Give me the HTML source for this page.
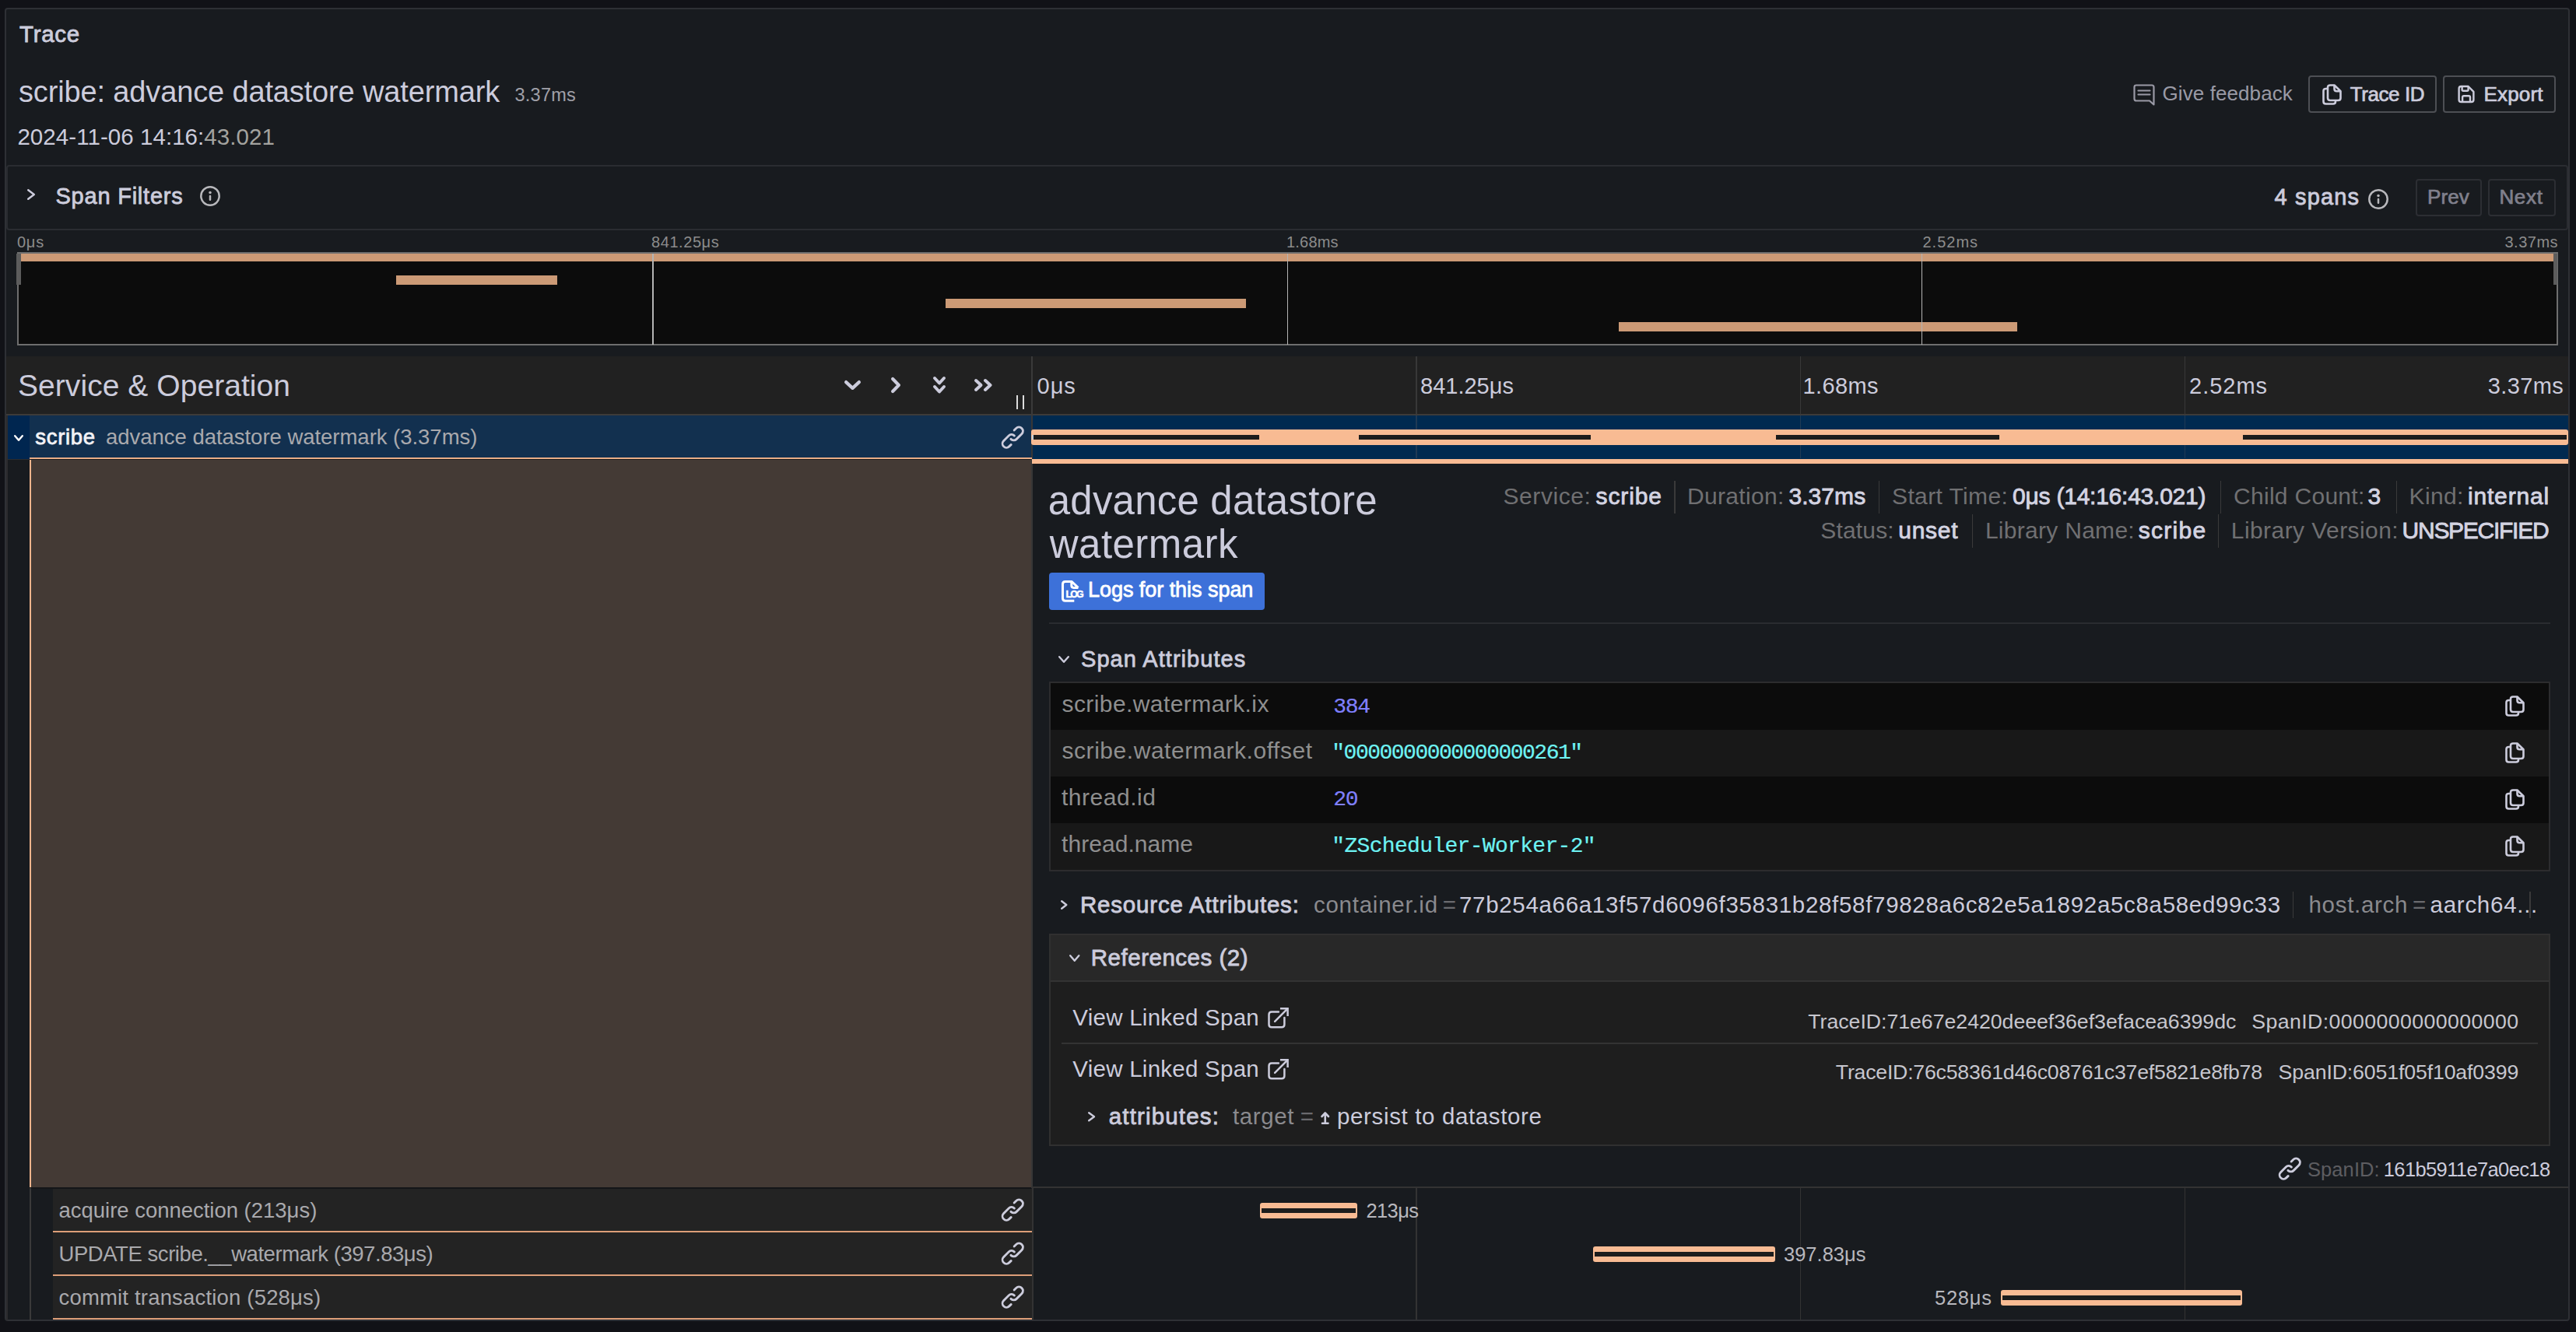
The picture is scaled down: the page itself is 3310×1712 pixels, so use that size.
<!DOCTYPE html>
<html><head><meta charset="utf-8"><title>Trace</title>
<style>
html,body{margin:0;padding:0;width:3310px;height:1712px;overflow:hidden;background:#111217;}
.t{position:absolute;white-space:pre;}
svg{overflow:visible}
</style></head><body>
<div style="position:absolute;left:6px;top:10px;width:3296px;height:1688px;box-sizing:border-box;border:2px solid #2e3035;border-radius:4px;background:#181b1f"></div>
<div style="position:absolute;left:2966px;top:97px;width:165px;height:48px;box-sizing:border-box;border:2px solid #4d4f54;border-radius:4px"></div>
<div style="position:absolute;left:3139px;top:97px;width:145px;height:48px;box-sizing:border-box;border:2px solid #4d4f54;border-radius:4px"></div>
<div style="position:absolute;left:7.5px;top:212px;width:3292.5px;height:84px;box-sizing:border-box;border:2px solid #2a2c31;border-radius:4px"></div>
<div style="position:absolute;left:3104px;top:230px;width:85px;height:48px;box-sizing:border-box;border:2px solid #2c2e33;border-radius:4px"></div>
<div style="position:absolute;left:3197px;top:230px;width:87px;height:48px;box-sizing:border-box;border:2px solid #2c2e33;border-radius:4px"></div>
<div style="position:absolute;left:22px;top:324px;width:1px;height:1px"></div>
<div style="position:absolute;left:22px;top:324px;width:3265px;height:120px;background:#6e6e6e;"></div>
<div style="position:absolute;left:24px;top:326px;width:3261px;height:116px;background:#0c0c0c;"></div>
<div style="position:absolute;left:27px;top:326px;width:3254px;height:10px;background:#cc9a76;"></div>
<div style="position:absolute;left:21px;top:326px;width:6px;height:40px;background:#5c5c5c;"></div>
<div style="position:absolute;left:3281px;top:326px;width:5px;height:40px;background:#5c5c5c;"></div>
<div style="position:absolute;left:509px;top:354px;width:207px;height:12px;background:#cc9a76;"></div>
<div style="position:absolute;left:1215px;top:384px;width:386px;height:12px;background:#cc9a76;"></div>
<div style="position:absolute;left:2080px;top:414px;width:512px;height:12px;background:#cc9a76;"></div>
<div style="position:absolute;left:838px;top:326px;width:1.5px;height:117px;background:#b4b4b4;"></div>
<div style="position:absolute;left:1653.5px;top:326px;width:1.5px;height:117px;background:#b4b4b4;"></div>
<div style="position:absolute;left:2468.5px;top:326px;width:1.5px;height:117px;background:#b4b4b4;"></div>
<div style="position:absolute;left:8px;top:458px;width:3292px;height:74px;background:#212121;"></div>
<div style="position:absolute;left:8px;top:532px;width:3292px;height:2px;background:#3d3b39;"></div>
<div style="position:absolute;left:1305.5px;top:508px;width:2.0px;height:18px;background:#dcdcdc;"></div>
<div style="position:absolute;left:1313.5px;top:508px;width:2.0px;height:18px;background:#dcdcdc;"></div>
<div style="position:absolute;left:1325px;top:458px;width:2px;height:76px;background:#3a3a3a;"></div>
<div style="position:absolute;left:1819px;top:458px;width:1.5px;height:74px;background:#383838;"></div>
<div style="position:absolute;left:2312.5px;top:458px;width:1.5px;height:74px;background:#383838;"></div>
<div style="position:absolute;left:2806.5px;top:458px;width:1.5px;height:74px;background:#383838;"></div>
<div style="position:absolute;left:8px;top:534px;width:2px;height:1163px;background:#2c2c2e;"></div>
<div style="position:absolute;left:10px;top:534px;width:28px;height:55.5px;background:#002650;"></div>
<div style="position:absolute;left:10px;top:589.5px;width:28px;height:1.5px;background:#2a2c30;"></div>
<div style="position:absolute;left:38px;top:534px;width:1288px;height:54px;background:#12304f;"></div>
<div style="position:absolute;left:1326px;top:534px;width:1974px;height:55.5px;background:#002a50;"></div>
<div style="position:absolute;left:1325px;top:534px;width:2px;height:992px;background:#373737;"></div>
<div style="position:absolute;left:1819px;top:534px;width:1.5px;height:55px;background:#1f3a55;"></div>
<div style="position:absolute;left:2312.5px;top:534px;width:1.5px;height:55px;background:#1f3a55;"></div>
<div style="position:absolute;left:2806.5px;top:534px;width:1.5px;height:55px;background:#1f3a55;"></div>
<div style="position:absolute;left:1325px;top:552px;width:1975px;height:19.5px;background:#f8bb93;border-radius:3px"></div>
<div style="position:absolute;left:1327px;top:559px;width:290.5px;height:5.600000000000023px;background:#1c1c1c;"></div>
<div style="position:absolute;left:1745.5px;top:559px;width:298.0999999999999px;height:5.600000000000023px;background:#1c1c1c;"></div>
<div style="position:absolute;left:2281.6px;top:559px;width:287.0px;height:5.600000000000023px;background:#1c1c1c;"></div>
<div style="position:absolute;left:2882px;top:559px;width:416px;height:5.600000000000023px;background:#1c1c1c;"></div>
<div style="position:absolute;left:1325.5px;top:559px;width:2.0px;height:5.600000000000023px;background:#c5ced6;"></div>
<div style="position:absolute;left:38px;top:588px;width:1288px;height:2px;background:#eaad86;"></div>
<div style="position:absolute;left:1326px;top:589.5px;width:1974px;height:6.5px;background:#f8bb93;"></div>
<div style="position:absolute;left:38px;top:590.5px;width:1287px;height:935.5px;background:#443a35;"></div>
<div style="position:absolute;left:38px;top:590.5px;width:2px;height:935.5px;background:#eeb48c;"></div>
<div style="position:absolute;left:1348px;top:736px;width:277px;height:48px;background:#3d71d9;border-radius:4px"></div>
<div style="position:absolute;left:2151px;top:617.5px;width:1.5px;height:42.5px;background:#3a3a3a;"></div>
<div style="position:absolute;left:2413.5px;top:617.5px;width:1.5px;height:42.5px;background:#3a3a3a;"></div>
<div style="position:absolute;left:2852.5px;top:617.5px;width:1.5px;height:42.5px;background:#3a3a3a;"></div>
<div style="position:absolute;left:3078.5px;top:617.5px;width:1.5px;height:42.5px;background:#3a3a3a;"></div>
<div style="position:absolute;left:2533.5px;top:661.3px;width:1.5px;height:43.200000000000045px;background:#3a3a3a;"></div>
<div style="position:absolute;left:2849.5px;top:661.3px;width:1.5px;height:43.200000000000045px;background:#3a3a3a;"></div>
<div style="position:absolute;left:1348px;top:800px;width:1929px;height:2px;background:#2a2c30;"></div>
<div style="position:absolute;left:1348px;top:876px;width:1929px;height:244px;box-sizing:border-box;border:2px solid #2c2c2e"></div>
<div style="position:absolute;left:1350px;top:878px;width:1925px;height:59.60000000000002px;background:#0c0c0c;"></div>
<div style="position:absolute;left:1350px;top:937.6px;width:1925px;height:60.0px;background:#181818;"></div>
<div style="position:absolute;left:1350px;top:997.6px;width:1925px;height:59.999999999999886px;background:#0c0c0c;"></div>
<div style="position:absolute;left:1350px;top:1057.6px;width:1925px;height:60.40000000000009px;background:#181818;"></div>
<div style="position:absolute;left:2945.5px;top:1146px;width:1.5px;height:34px;background:#3a3a3a;"></div>
<div style="position:absolute;left:3250px;top:1146px;width:1.5px;height:34px;background:#3a3a3a;"></div>
<div style="position:absolute;left:1348px;top:1200px;width:1929px;height:273px;box-sizing:border-box;border:2px solid #303030;background:#1e1e1e"></div>
<div style="position:absolute;left:1350px;top:1202px;width:1925px;height:58px;background:#282828;"></div>
<div style="position:absolute;left:1350px;top:1260px;width:1925px;height:2px;background:#333333;"></div>
<div style="position:absolute;left:1364px;top:1340px;width:1897px;height:2px;background:#333333;"></div>
<div style="position:absolute;left:38px;top:1526px;width:1287px;height:1.5px;background:#141518;"></div>
<div style="position:absolute;left:1325px;top:1525px;width:1975px;height:2px;background:#333333;"></div>
<div style="position:absolute;left:1326px;top:1527px;width:1.5px;height:170px;background:#333333;"></div>
<div style="position:absolute;left:1819px;top:1527px;width:1.5px;height:170px;background:#333333;"></div>
<div style="position:absolute;left:2312.5px;top:1527px;width:1.5px;height:170px;background:#333333;"></div>
<div style="position:absolute;left:2806.5px;top:1527px;width:1.5px;height:170px;background:#333333;"></div>
<div style="position:absolute;left:38px;top:1527px;width:2px;height:170px;background:#3a3a3a;"></div>
<div style="position:absolute;left:68px;top:1528px;width:1258px;height:54px;background:#232323;"></div>
<div style="position:absolute;left:68px;top:1582px;width:1258px;height:2px;background:#dd9e78;"></div>
<div style="position:absolute;left:1619px;top:1546px;width:125px;height:19.5px;background:#f8bb93;border-radius:3px"></div>
<div style="position:absolute;left:1621px;top:1552.5px;width:121px;height:6.5px;background:#1c1c1c;"></div>
<div style="position:absolute;left:68px;top:1584px;width:1258px;height:54px;background:#232323;"></div>
<div style="position:absolute;left:68px;top:1638px;width:1258px;height:2px;background:#dd9e78;"></div>
<div style="position:absolute;left:2047px;top:1602px;width:234px;height:19.5px;background:#f8bb93;border-radius:3px"></div>
<div style="position:absolute;left:2049px;top:1608.5px;width:230px;height:6.5px;background:#1c1c1c;"></div>
<div style="position:absolute;left:68px;top:1640px;width:1258px;height:54px;background:#232323;"></div>
<div style="position:absolute;left:68px;top:1694px;width:1258px;height:2px;background:#dd9e78;"></div>
<div style="position:absolute;left:2570.5px;top:1658px;width:310.0px;height:19.5px;background:#f8bb93;border-radius:3px"></div>
<div style="position:absolute;left:2572.5px;top:1664.5px;width:306.0px;height:6.5px;background:#1c1c1c;"></div>
<svg style="position:absolute;left:2741px;top:108px;" width="28" height="28" viewBox="0 0 28 28"><g fill="none" stroke="#9a9aa6" stroke-width="2.2" stroke-linejoin="round"><path d="M4,1.5 H24 Q26.5,1.5 26.5,4 V26.5 L21,21.5 H4 Q1.5,21.5 1.5,19 V4 Q1.5,1.5 4,1.5 Z"/><path d="M6.5,8.5 H21.5 M6.5,13.5 H21.5" stroke-linecap="round"/></g></svg>
<svg style="position:absolute;left:2984px;top:108px;" width="25" height="27" viewBox="0 0 25 27"><g fill="none" stroke="#ccccdc" stroke-width="2.6" stroke-linejoin="round"><path d="M7,6 H4.5 Q1.5,6 1.5,9 V22.5 Q1.5,25.5 4.5,25.5 H14 Q17,25.5 17,22.5 V21"/><path d="M10,1.5 H15.5 L23.5,9.3 V18 Q23.5,21 20.5,21 H10 Q7,21 7,18 V4.5 Q7,1.5 10,1.5 Z"/><path d="M15.5,1.5 V6.3 Q15.5,9.3 18.5,9.3 H23.5"/></g></svg>
<svg style="position:absolute;left:3157px;top:109px;" width="23" height="24" viewBox="0 0 23 24"><g fill="none" stroke="#ccccdc" stroke-width="2.4" stroke-linejoin="round"><path d="M5.4,2 H14.6 L21.4,8.9 V19.2 Q21.4,22 18.6,22 H5.4 Q2.6,22 2.6,19.2 V4.8 Q2.6,2 5.4,2 Z"/><path d="M6.6,2.2 V6.2 Q6.6,7.7 8.1,7.7 H13.1 Q14.6,7.7 14.6,6.2 V2.5"/><path d="M7.1,21.8 V16.1 Q7.1,14.3 8.9,14.3 H15.2 Q17,14.3 17,16.1 V21.8"/></g></svg>
<svg style="position:absolute;left:35px;top:243px;" width="10" height="14" viewBox="0 0 10 14"><polyline points="1.25,1.25 8.75,7.0 1.25,12.75" fill="none" stroke="#ccccdc" stroke-width="2.5" stroke-linecap="round" stroke-linejoin="round"/></svg>
<svg style="position:absolute;left:257.0px;top:239.0px;" width="26.0" height="26.0" viewBox="0 0 26.0 26.0"><circle cx="13.0" cy="13.0" r="11.7" fill="none" stroke="#b8b8bc" stroke-width="2.5"/><circle cx="13.0" cy="8.4" r="1.75" fill="#b8b8bc"/><rect x="11.75" y="11.8" width="2.5" height="7.2" rx="1.2" fill="#b8b8bc"/></svg>
<svg style="position:absolute;left:3042.7px;top:242.7px;" width="26.0" height="26.0" viewBox="0 0 26.0 26.0"><circle cx="13.0" cy="13.0" r="11.7" fill="none" stroke="#b8b8bc" stroke-width="2.5"/><circle cx="13.0" cy="8.4" r="1.75" fill="#b8b8bc"/><rect x="11.75" y="11.8" width="2.5" height="7.2" rx="1.2" fill="#b8b8bc"/></svg>
<svg style="position:absolute;left:1085px;top:489px;" width="21" height="12" viewBox="0 0 21 12"><polyline points="2.1,2.1 10.5,9.9 18.9,2.1" fill="none" stroke="#ccccdc" stroke-width="4.2" stroke-linecap="round" stroke-linejoin="round"/></svg>
<svg style="position:absolute;left:1145px;top:485px;" width="12" height="20" viewBox="0 0 12 20"><polyline points="2.1,2.1 9.9,10.0 2.1,17.9" fill="none" stroke="#ccccdc" stroke-width="4.2" stroke-linecap="round" stroke-linejoin="round"/></svg>
<svg style="position:absolute;left:1199px;top:484px;" width="16" height="10.5" viewBox="0 0 16 10.5"><polyline points="2.0,2.0 8.0,8.5 14.0,2.0" fill="none" stroke="#ccccdc" stroke-width="4.0" stroke-linecap="round" stroke-linejoin="round"/></svg>
<svg style="position:absolute;left:1199px;top:495px;" width="16" height="10.5" viewBox="0 0 16 10.5"><polyline points="2.0,2.0 8.0,8.5 14.0,2.0" fill="none" stroke="#ccccdc" stroke-width="4.0" stroke-linecap="round" stroke-linejoin="round"/></svg>
<svg style="position:absolute;left:1252px;top:487px;" width="10.5" height="16" viewBox="0 0 10.5 16"><polyline points="2.0,2.0 8.5,8.0 2.0,14.0" fill="none" stroke="#ccccdc" stroke-width="4.0" stroke-linecap="round" stroke-linejoin="round"/></svg>
<svg style="position:absolute;left:1263.5px;top:487px;" width="10.5" height="16" viewBox="0 0 10.5 16"><polyline points="2.0,2.0 8.5,8.0 2.0,14.0" fill="none" stroke="#ccccdc" stroke-width="4.0" stroke-linecap="round" stroke-linejoin="round"/></svg>
<svg style="position:absolute;left:18px;top:559px;" width="12" height="8" viewBox="0 0 12 8"><polyline points="1.2,1.2 6.0,6.8 10.8,1.2" fill="none" stroke="#ffffff" stroke-width="2.4" stroke-linecap="round" stroke-linejoin="round"/></svg>
<svg style="position:absolute;left:1287.8px;top:548.8px;" width="26.40000000000009" height="26.40000000000009" viewBox="3.0 3.0 18.0 18.0"><path d="M10,17.55,8.23,19.27a2.47,2.47,0,0,1-3.5-3.5l4.54-4.55a2.46,2.46,0,0,1,3.39-.09l.12.1a1,1,0,0,0,1.4-1.43A2.75,2.75,0,0,0,14,9.59a4.46,4.46,0,0,0-6.09.22L3.31,14.36a4.48,4.48,0,0,0,6.33,6.33L11.37,19A1,1,0,0,0,10,17.55ZM20.69,3.31a4.49,4.49,0,0,0-6.330,0L12.63,5A1,1,0,0,0,14,6.45l1.73-1.72a2.470,2.470,0,0,1,3.5,3.5l-4.54,4.55a2.46,2.46,0,0,1-3.39.09l-.12-.1a1,1,0,0,0-1.4,1.43,2.75,2.75,0,0,0,.23.21,4.47,4.47,0,0,0,6.090-.22l4.55-4.55A4.49,4.49,0,0,0,20.69,3.31Z" fill="#ccccdc"/></svg>
<svg style="position:absolute;left:1360px;top:744px;" width="36" height="34" viewBox="0 0 36 34"><g fill="none" stroke="#fff" stroke-width="3" stroke-linejoin="round"><path d="M20.3,28.3 H8.8 Q5.5,28.3 5.5,25 V6.8 Q5.5,3.5 8.8,3.5 H17.2 L25.4,11.4"/><path d="M16.8,4 V8.6 Q16.8,11.4 19.6,11.4 H25.4"/></g><text x="9.6" y="24.2" font-family="Liberation Sans" font-weight="700" font-size="12.4" fill="#fff" stroke="#fff" stroke-width="0.5" letter-spacing="-1.9">LOG</text></svg>
<svg style="position:absolute;left:1360px;top:843px;" width="14" height="9" viewBox="0 0 14 9"><polyline points="1.2,1.2 7.0,7.8 12.8,1.2" fill="none" stroke="#ccccdc" stroke-width="2.4" stroke-linecap="round" stroke-linejoin="round"/></svg>
<svg style="position:absolute;left:3218.5px;top:894.3px;" width="25.0" height="27.0" viewBox="0 0 25.0 27.0"><g fill="none" stroke="#ccccdc" stroke-width="2.6" stroke-linejoin="round"><path d="M7,6 H4.5 Q1.5,6 1.5,9 V22.5 Q1.5,25.5 4.5,25.5 H14 Q17,25.5 17,22.5 V21"/><path d="M10,1.5 H15.5 L23.5,9.3 V18 Q23.5,21 20.5,21 H10 Q7,21 7,18 V4.5 Q7,1.5 10,1.5 Z"/><path d="M15.5,1.5 V6.3 Q15.5,9.3 18.5,9.3 H23.5"/></g></svg>
<svg style="position:absolute;left:3218.5px;top:954.3px;" width="25.0" height="27.0" viewBox="0 0 25.0 27.0"><g fill="none" stroke="#ccccdc" stroke-width="2.6" stroke-linejoin="round"><path d="M7,6 H4.5 Q1.5,6 1.5,9 V22.5 Q1.5,25.5 4.5,25.5 H14 Q17,25.5 17,22.5 V21"/><path d="M10,1.5 H15.5 L23.5,9.3 V18 Q23.5,21 20.5,21 H10 Q7,21 7,18 V4.5 Q7,1.5 10,1.5 Z"/><path d="M15.5,1.5 V6.3 Q15.5,9.3 18.5,9.3 H23.5"/></g></svg>
<svg style="position:absolute;left:3218.5px;top:1014.3px;" width="25.0" height="27.0" viewBox="0 0 25.0 27.0"><g fill="none" stroke="#ccccdc" stroke-width="2.6" stroke-linejoin="round"><path d="M7,6 H4.5 Q1.5,6 1.5,9 V22.5 Q1.5,25.5 4.5,25.5 H14 Q17,25.5 17,22.5 V21"/><path d="M10,1.5 H15.5 L23.5,9.3 V18 Q23.5,21 20.5,21 H10 Q7,21 7,18 V4.5 Q7,1.5 10,1.5 Z"/><path d="M15.5,1.5 V6.3 Q15.5,9.3 18.5,9.3 H23.5"/></g></svg>
<svg style="position:absolute;left:3218.5px;top:1074.3px;" width="25.0" height="27.0" viewBox="0 0 25.0 27.0"><g fill="none" stroke="#ccccdc" stroke-width="2.6" stroke-linejoin="round"><path d="M7,6 H4.5 Q1.5,6 1.5,9 V22.5 Q1.5,25.5 4.5,25.5 H14 Q17,25.5 17,22.5 V21"/><path d="M10,1.5 H15.5 L23.5,9.3 V18 Q23.5,21 20.5,21 H10 Q7,21 7,18 V4.5 Q7,1.5 10,1.5 Z"/><path d="M15.5,1.5 V6.3 Q15.5,9.3 18.5,9.3 H23.5"/></g></svg>
<svg style="position:absolute;left:1362.5px;top:1157px;" width="8.5" height="12" viewBox="0 0 8.5 12"><polyline points="1.2,1.2 7.3,6.0 1.2,10.8" fill="none" stroke="#ccccdc" stroke-width="2.4" stroke-linecap="round" stroke-linejoin="round"/></svg>
<svg style="position:absolute;left:1374px;top:1227px;" width="13.5" height="9" viewBox="0 0 13.5 9"><polyline points="1.2,1.2 6.75,7.8 12.3,1.2" fill="none" stroke="#ccccdc" stroke-width="2.4" stroke-linecap="round" stroke-linejoin="round"/></svg>
<svg style="position:absolute;left:1628.5px;top:1294.5px;" width="27.0" height="27.0" viewBox="0 0 27.0 27.0"><g fill="none" stroke="#ccccdc" stroke-width="2.5" stroke-linejoin="round"><path d="M13.9,5.5 H5 Q1.5,5.5 1.5,9 V21.8 Q1.5,25.3 5,25.3 H17.9 Q21.4,25.3 21.4,21.8 V13" stroke-linecap="round"/><path d="M17.2,1.3 H25.6 V9.7" stroke-linecap="square" stroke-linejoin="miter"/><path d="M25.2,1.7 L9.1,17.8" stroke-linecap="round"/></g></svg>
<svg style="position:absolute;left:1628.5px;top:1360.5px;" width="27.0" height="27.0" viewBox="0 0 27.0 27.0"><g fill="none" stroke="#ccccdc" stroke-width="2.5" stroke-linejoin="round"><path d="M13.9,5.5 H5 Q1.5,5.5 1.5,9 V21.8 Q1.5,25.3 5,25.3 H17.9 Q21.4,25.3 21.4,21.8 V13" stroke-linecap="round"/><path d="M17.2,1.3 H25.6 V9.7" stroke-linecap="square" stroke-linejoin="miter"/><path d="M25.2,1.7 L9.1,17.8" stroke-linecap="round"/></g></svg>
<svg style="position:absolute;left:1398.3px;top:1428.5px;" width="9.200000000000045" height="12.5" viewBox="0 0 9.200000000000045 12.5"><polyline points="1.2,1.2 8.000000000000046,6.25 1.2,11.3" fill="none" stroke="#ccccdc" stroke-width="2.4" stroke-linecap="round" stroke-linejoin="round"/></svg>
<svg style="position:absolute;left:1696.5px;top:1429px;" width="11.5" height="16" viewBox="0 0 11.5 16"><g fill="none" stroke="#ccccdc" stroke-width="2.6" stroke-linecap="round" stroke-linejoin="round"><path d="M5.75,14.5 V2 M1.5,6 L5.75,1.5 L10,6 M2,14.8 H9.5"/></g></svg>
<svg style="position:absolute;left:2928.8px;top:1488.8px;" width="26.399999999999636" height="26.40000000000009" viewBox="3.0 3.0 18.0 18.0"><path d="M10,17.55,8.23,19.27a2.47,2.47,0,0,1-3.5-3.5l4.54-4.55a2.46,2.46,0,0,1,3.39-.09l.12.1a1,1,0,0,0,1.4-1.43A2.75,2.75,0,0,0,14,9.59a4.46,4.46,0,0,0-6.09.22L3.31,14.36a4.48,4.48,0,0,0,6.33,6.33L11.37,19A1,1,0,0,0,10,17.55ZM20.69,3.31a4.49,4.49,0,0,0-6.330,0L12.63,5A1,1,0,0,0,14,6.45l1.73-1.72a2.470,2.470,0,0,1,3.5,3.5l-4.54,4.55a2.46,2.46,0,0,1-3.39.09l-.12-.1a1,1,0,0,0-1.4,1.43,2.75,2.75,0,0,0,.23.21,4.47,4.47,0,0,0,6.090-.22l4.55-4.55A4.49,4.49,0,0,0,20.69,3.31Z" fill="#ccccdc"/></svg>
<svg style="position:absolute;left:1287.8px;top:1542.1px;" width="26.40000000000009" height="26.40000000000009" viewBox="3.0 3.0 18.0 18.0"><path d="M10,17.55,8.23,19.27a2.47,2.47,0,0,1-3.5-3.5l4.54-4.55a2.46,2.46,0,0,1,3.39-.09l.12.1a1,1,0,0,0,1.4-1.43A2.75,2.75,0,0,0,14,9.59a4.46,4.46,0,0,0-6.09.22L3.31,14.36a4.48,4.48,0,0,0,6.33,6.33L11.37,19A1,1,0,0,0,10,17.55ZM20.69,3.31a4.49,4.49,0,0,0-6.330,0L12.63,5A1,1,0,0,0,14,6.45l1.73-1.72a2.470,2.470,0,0,1,3.5,3.5l-4.54,4.55a2.46,2.46,0,0,1-3.39.09l-.12-.1a1,1,0,0,0-1.4,1.43,2.75,2.75,0,0,0,.23.21,4.47,4.47,0,0,0,6.090-.22l4.55-4.55A4.49,4.49,0,0,0,20.69,3.31Z" fill="#ccccdc"/></svg>
<svg style="position:absolute;left:1287.8px;top:1598.1px;" width="26.40000000000009" height="26.40000000000009" viewBox="3.0 3.0 18.0 18.0"><path d="M10,17.55,8.23,19.27a2.47,2.47,0,0,1-3.5-3.5l4.54-4.55a2.46,2.46,0,0,1,3.39-.09l.12.1a1,1,0,0,0,1.4-1.43A2.75,2.75,0,0,0,14,9.59a4.46,4.46,0,0,0-6.09.22L3.31,14.36a4.48,4.48,0,0,0,6.33,6.33L11.37,19A1,1,0,0,0,10,17.55ZM20.69,3.31a4.49,4.49,0,0,0-6.330,0L12.63,5A1,1,0,0,0,14,6.45l1.73-1.72a2.470,2.470,0,0,1,3.5,3.5l-4.54,4.55a2.46,2.46,0,0,1-3.39.09l-.12-.1a1,1,0,0,0-1.4,1.43,2.75,2.75,0,0,0,.23.21,4.47,4.47,0,0,0,6.090-.22l4.55-4.55A4.49,4.49,0,0,0,20.69,3.31Z" fill="#ccccdc"/></svg>
<svg style="position:absolute;left:1287.8px;top:1654.1px;" width="26.40000000000009" height="26.40000000000009" viewBox="3.0 3.0 18.0 18.0"><path d="M10,17.55,8.23,19.27a2.47,2.47,0,0,1-3.5-3.5l4.54-4.55a2.46,2.46,0,0,1,3.39-.09l.12.1a1,1,0,0,0,1.4-1.43A2.75,2.75,0,0,0,14,9.59a4.46,4.46,0,0,0-6.09.22L3.31,14.36a4.48,4.48,0,0,0,6.33,6.33L11.37,19A1,1,0,0,0,10,17.55ZM20.69,3.31a4.49,4.49,0,0,0-6.330,0L12.63,5A1,1,0,0,0,14,6.45l1.73-1.72a2.470,2.470,0,0,1,3.5,3.5l-4.54,4.55a2.46,2.46,0,0,1-3.39.09l-.12-.1a1,1,0,0,0-1.4,1.43,2.75,2.75,0,0,0,.23.21,4.47,4.47,0,0,0,6.090-.22l4.55-4.55A4.49,4.49,0,0,0,20.69,3.31Z" fill="#ccccdc"/></svg>
<div class="t" style="left:25.00px;top:29.07px;font-size:29.5px;line-height:29.5px;font-weight:400;font-family:'Liberation Sans', sans-serif;letter-spacing:0.700px;color:#ccccdc;-webkit-text-stroke:0.83px #ccccdc;">Trace</div>
<div class="t" style="left:24.00px;top:98.59px;font-size:38px;line-height:38px;font-weight:400;font-family:'Liberation Sans', sans-serif;letter-spacing:-0.144px;color:#ccccdc;">scribe: advance datastore watermark</div>
<div class="t" style="left:661.40px;top:110.84px;font-size:23.5px;line-height:23.5px;font-weight:400;font-family:'Liberation Sans', sans-serif;letter-spacing:0.280px;color:#a0a0a8;">3.37ms</div>
<div class="t" style="left:22.40px;top:160.97px;font-size:29.5px;line-height:29.5px;font-weight:400;font-family:'Liberation Sans', sans-serif;letter-spacing:0.059px;color:#ccccdc;"><span>2024-11-06 14:16:</span><span style="color:#a3a39f">43.021</span></div>
<div class="t" style="left:2778.50px;top:107.23px;font-size:26px;line-height:26px;font-weight:400;font-family:'Liberation Sans', sans-serif;letter-spacing:0.092px;color:#9a9aa6;">Give feedback</div>
<div class="t" style="left:3019.70px;top:107.53px;font-size:26px;line-height:26px;font-weight:400;font-family:'Liberation Sans', sans-serif;letter-spacing:-0.414px;color:#ccccdc;-webkit-text-stroke:0.73px #ccccdc;">Trace ID</div>
<div class="t" style="left:3191.50px;top:107.53px;font-size:26px;line-height:26px;font-weight:400;font-family:'Liberation Sans', sans-serif;letter-spacing:0.160px;color:#ccccdc;-webkit-text-stroke:0.73px #ccccdc;">Export</div>
<div class="t" style="left:71.50px;top:238.00px;font-size:29px;line-height:29px;font-weight:400;font-family:'Liberation Sans', sans-serif;letter-spacing:0.773px;color:#ccccdc;-webkit-text-stroke:0.81px #ccccdc;">Span Filters</div>
<div class="t" style="left:2922.60px;top:239.00px;font-size:29px;line-height:29px;font-weight:400;font-family:'Liberation Sans', sans-serif;letter-spacing:1.133px;color:#ccccdc;-webkit-text-stroke:0.81px #ccccdc;">4 spans</div>
<div class="t" style="left:3119.00px;top:240.33px;font-size:26px;line-height:26px;font-weight:400;font-family:'Liberation Sans', sans-serif;letter-spacing:0.067px;color:#80808c;-webkit-text-stroke:0.73px #80808c;">Prev</div>
<div class="t" style="left:3211.40px;top:240.33px;font-size:26px;line-height:26px;font-weight:400;font-family:'Liberation Sans', sans-serif;letter-spacing:0.700px;color:#80808c;-webkit-text-stroke:0.73px #80808c;">Next</div>
<div class="t" style="left:22.00px;top:301.10px;font-size:20px;line-height:20px;font-weight:400;font-family:'Liberation Sans', sans-serif;letter-spacing:0.750px;color:#8c8c8c;">0μs</div>
<div class="t" style="left:837.00px;top:301.10px;font-size:20px;line-height:20px;font-weight:400;font-family:'Liberation Sans', sans-serif;letter-spacing:0.571px;color:#8c8c8c;">841.25μs</div>
<div class="t" style="left:1653.00px;top:301.10px;font-size:20px;line-height:20px;font-weight:400;font-family:'Liberation Sans', sans-serif;letter-spacing:0.200px;color:#8c8c8c;">1.68ms</div>
<div class="t" style="left:2470.50px;top:301.10px;font-size:20px;line-height:20px;font-weight:400;font-family:'Liberation Sans', sans-serif;letter-spacing:1.000px;color:#8c8c8c;">2.52ms</div>
<div class="t" style="left:3218.50px;top:301.10px;font-size:20px;line-height:20px;font-weight:400;font-family:'Liberation Sans', sans-serif;letter-spacing:0.500px;color:#8c8c8c;">3.37ms</div>
<div class="t" style="left:23.00px;top:476.05px;font-size:39px;line-height:39px;font-weight:400;font-family:'Liberation Sans', sans-serif;letter-spacing:0.056px;color:#ccccdc;">Service &amp; Operation</div>
<div class="t" style="left:1332.50px;top:481.50px;font-size:29px;line-height:29px;font-weight:400;font-family:'Liberation Sans', sans-serif;letter-spacing:1.000px;color:#ccccdc;">0μs</div>
<div class="t" style="left:1825.00px;top:481.50px;font-size:29px;line-height:29px;font-weight:400;font-family:'Liberation Sans', sans-serif;color:#ccccdc;">841.25μs</div>
<div class="t" style="left:2316.50px;top:481.50px;font-size:29px;line-height:29px;font-weight:400;font-family:'Liberation Sans', sans-serif;letter-spacing:0.400px;color:#ccccdc;">1.68ms</div>
<div class="t" style="left:2813.00px;top:481.50px;font-size:29px;line-height:29px;font-weight:400;font-family:'Liberation Sans', sans-serif;letter-spacing:1.000px;color:#ccccdc;">2.52ms</div>
<div class="t" style="left:3196.80px;top:481.50px;font-size:29px;line-height:29px;font-weight:400;font-family:'Liberation Sans', sans-serif;letter-spacing:0.360px;color:#ccccdc;">3.37ms</div>
<div class="t" style="left:45.25px;top:548.01px;font-size:27.5px;line-height:27.5px;font-weight:400;font-family:'Liberation Sans', sans-serif;letter-spacing:0.700px;color:#f2f2f6;-webkit-text-stroke:0.77px #f2f2f6;">scribe</div>
<div class="t" style="left:136.00px;top:548.01px;font-size:27.5px;line-height:27.5px;font-weight:400;font-family:'Liberation Sans', sans-serif;letter-spacing:-0.029px;color:#a9a9ad;">advance datastore watermark (3.37ms)</div>
<div class="t" style="left:1346.75px;top:617.90px;font-size:51px;line-height:51px;font-weight:400;font-family:'Liberation Sans', sans-serif;letter-spacing:0.203px;color:#ccccdc;">advance datastore</div>
<div class="t" style="left:1348.75px;top:674.40px;font-size:51px;line-height:51px;font-weight:400;font-family:'Liberation Sans', sans-serif;letter-spacing:0.469px;color:#ccccdc;">watermark</div>
<div class="t" style="left:1398.00px;top:745.18px;font-size:27px;line-height:27px;font-weight:400;font-family:'Liberation Sans', sans-serif;letter-spacing:-0.044px;color:#ffffff;-webkit-text-stroke:0.76px #ffffff;">Logs for this span</div>
<div class="t" style="left:1931.50px;top:623.40px;font-size:30px;line-height:30px;font-weight:400;font-family:'Liberation Sans', sans-serif;letter-spacing:0.571px;color:#707072;">Service:</div>
<div class="t" style="left:2050.50px;top:623.40px;font-size:30px;line-height:30px;font-weight:400;font-family:'Liberation Sans', sans-serif;letter-spacing:0.900px;color:#d4d4e2;-webkit-text-stroke:0.84px #d4d4e2;">scribe</div>
<div class="t" style="left:2168.00px;top:623.40px;font-size:30px;line-height:30px;font-weight:400;font-family:'Liberation Sans', sans-serif;letter-spacing:0.312px;color:#707072;">Duration:</div>
<div class="t" style="left:2298.50px;top:623.40px;font-size:30px;line-height:30px;font-weight:400;font-family:'Liberation Sans', sans-serif;letter-spacing:0.050px;color:#d4d4e2;-webkit-text-stroke:0.84px #d4d4e2;">3.37ms</div>
<div class="t" style="left:2431.00px;top:623.40px;font-size:30px;line-height:30px;font-weight:400;font-family:'Liberation Sans', sans-serif;letter-spacing:0.380px;color:#707072;">Start Time:</div>
<div class="t" style="left:2586.10px;top:623.40px;font-size:30px;line-height:30px;font-weight:400;font-family:'Liberation Sans', sans-serif;letter-spacing:-0.241px;color:#d4d4e2;-webkit-text-stroke:0.84px #d4d4e2;">0μs (14:16:43.021)</div>
<div class="t" style="left:2870.00px;top:623.40px;font-size:30px;line-height:30px;font-weight:400;font-family:'Liberation Sans', sans-serif;letter-spacing:0.291px;color:#707072;">Child Count:</div>
<div class="t" style="left:3042.40px;top:623.40px;font-size:30px;line-height:30px;font-weight:400;font-family:'Liberation Sans', sans-serif;color:#d4d4e2;-webkit-text-stroke:0.84px #d4d4e2;">3</div>
<div class="t" style="left:3095.60px;top:623.40px;font-size:30px;line-height:30px;font-weight:400;font-family:'Liberation Sans', sans-serif;letter-spacing:0.350px;color:#707072;">Kind:</div>
<div class="t" style="left:3170.90px;top:623.40px;font-size:30px;line-height:30px;font-weight:400;font-family:'Liberation Sans', sans-serif;letter-spacing:0.843px;color:#d4d4e2;-webkit-text-stroke:0.84px #d4d4e2;">internal</div>
<div class="t" style="left:2339.25px;top:667.35px;font-size:30px;line-height:30px;font-weight:400;font-family:'Liberation Sans', sans-serif;letter-spacing:0.167px;color:#707072;">Status:</div>
<div class="t" style="left:2439.25px;top:667.35px;font-size:30px;line-height:30px;font-weight:400;font-family:'Liberation Sans', sans-serif;letter-spacing:0.750px;color:#d4d4e2;-webkit-text-stroke:0.84px #d4d4e2;">unset</div>
<div class="t" style="left:2550.90px;top:667.35px;font-size:30px;line-height:30px;font-weight:400;font-family:'Liberation Sans', sans-serif;letter-spacing:0.283px;color:#707072;">Library Name:</div>
<div class="t" style="left:2747.70px;top:667.35px;font-size:30px;line-height:30px;font-weight:400;font-family:'Liberation Sans', sans-serif;letter-spacing:1.280px;color:#d4d4e2;-webkit-text-stroke:0.84px #d4d4e2;">scribe</div>
<div class="t" style="left:2866.80px;top:667.35px;font-size:30px;line-height:30px;font-weight:400;font-family:'Liberation Sans', sans-serif;letter-spacing:0.427px;color:#707072;">Library Version:</div>
<div class="t" style="left:3086.60px;top:667.35px;font-size:30px;line-height:30px;font-weight:400;font-family:'Liberation Sans', sans-serif;letter-spacing:-1.270px;color:#d4d4e2;-webkit-text-stroke:0.84px #d4d4e2;">UNSPECIFIED</div>
<div class="t" style="left:1389.00px;top:832.50px;font-size:29px;line-height:29px;font-weight:400;font-family:'Liberation Sans', sans-serif;letter-spacing:1.036px;color:#ccccdc;-webkit-text-stroke:0.81px #ccccdc;">Span Attributes</div>
<div class="t" style="left:1364.50px;top:890.15px;font-size:30px;line-height:30px;font-weight:400;font-family:'Liberation Sans', sans-serif;letter-spacing:0.417px;color:#8f8f8f;">scribe.watermark.ix</div>
<div class="t" style="left:1364.50px;top:950.15px;font-size:30px;line-height:30px;font-weight:400;font-family:'Liberation Sans', sans-serif;letter-spacing:0.545px;color:#8f8f8f;">scribe.watermark.offset</div>
<div class="t" style="left:1364.00px;top:1010.35px;font-size:30px;line-height:30px;font-weight:400;font-family:'Liberation Sans', sans-serif;letter-spacing:0.513px;color:#8f8f8f;">thread.id</div>
<div class="t" style="left:1364.00px;top:1070.35px;font-size:30px;line-height:30px;font-weight:400;font-family:'Liberation Sans', sans-serif;letter-spacing:0.060px;color:#8f8f8f;">thread.name</div>
<div class="t" style="left:1713.30px;top:894.54px;font-size:28px;line-height:28px;font-weight:400;font-family:'Liberation Mono', monospace;letter-spacing:-1.300px;color:#8080ff;-webkit-text-stroke:0.2px currentColor;">384</div>
<div class="t" style="left:1711.30px;top:954.04px;font-size:28px;line-height:28px;font-weight:400;font-family:'Liberation Mono', monospace;letter-spacing:-1.505px;color:#6ef3f3;-webkit-text-stroke:0.2px currentColor;">&quot;0000000000000000261&quot;</div>
<div class="t" style="left:1713.30px;top:1014.44px;font-size:28px;line-height:28px;font-weight:400;font-family:'Liberation Mono', monospace;letter-spacing:-1.300px;color:#8080ff;-webkit-text-stroke:0.2px currentColor;">20</div>
<div class="t" style="left:1711.30px;top:1073.84px;font-size:28px;line-height:28px;font-weight:400;font-family:'Liberation Mono', monospace;letter-spacing:-0.675px;color:#6ef3f3;-webkit-text-stroke:0.2px currentColor;">&quot;ZScheduler-Worker-2&quot;</div>
<div class="t" style="left:1388.00px;top:1148.07px;font-size:29.5px;line-height:29.5px;font-weight:400;font-family:'Liberation Sans', sans-serif;letter-spacing:0.800px;color:#ccccdc;-webkit-text-stroke:0.83px #ccccdc;">Resource Attributes:</div>
<div class="t" style="left:1687.90px;top:1147.67px;font-size:29.5px;line-height:29.5px;font-weight:400;font-family:'Liberation Sans', sans-serif;letter-spacing:0.755px;color:#8a8a8e;">container.id</div>
<div class="t" style="left:1853.70px;top:1147.67px;font-size:29.5px;line-height:29.5px;font-weight:400;font-family:'Liberation Sans', sans-serif;color:#6a6a6e;">=</div>
<div class="t" style="left:1875.00px;top:1147.67px;font-size:29.5px;line-height:29.5px;font-weight:400;font-family:'Liberation Sans', sans-serif;letter-spacing:0.681px;color:#ccccdc;">77b254a66a13f57d6096f35831b28f58f79828a6c82e5a1892a5c8a58ed99c33</div>
<div class="t" style="left:2966.50px;top:1147.67px;font-size:29.5px;line-height:29.5px;font-weight:400;font-family:'Liberation Sans', sans-serif;letter-spacing:0.688px;color:#8a8a8e;">host.arch</div>
<div class="t" style="left:3100.00px;top:1147.67px;font-size:29.5px;line-height:29.5px;font-weight:400;font-family:'Liberation Sans', sans-serif;color:#6a6a6e;">=</div>
<div class="t" style="left:3122.60px;top:1147.67px;font-size:29.5px;line-height:29.5px;font-weight:400;font-family:'Liberation Sans', sans-serif;letter-spacing:0.722px;color:#ccccdc;">aarch64...</div>
<div class="t" style="left:1401.80px;top:1216.37px;font-size:29.5px;line-height:29.5px;font-weight:400;font-family:'Liberation Sans', sans-serif;letter-spacing:0.515px;color:#ccccdc;-webkit-text-stroke:0.83px #ccccdc;">References (2)</div>
<div class="t" style="left:1378.30px;top:1293.37px;font-size:29.5px;line-height:29.5px;font-weight:400;font-family:'Liberation Sans', sans-serif;letter-spacing:0.253px;color:#ccccdc;">View Linked Span</div>
<div class="t" style="left:2323.30px;top:1299.74px;font-size:26.7px;line-height:26.7px;font-weight:400;font-family:'Liberation Sans', sans-serif;letter-spacing:-0.026px;color:#c6c6ce;">TraceID:71e67e2420deeef36ef3efacea6399dc</div>
<div class="t" style="left:2893.30px;top:1299.74px;font-size:26.7px;line-height:26.7px;font-weight:400;font-family:'Liberation Sans', sans-serif;letter-spacing:0.409px;color:#c6c6ce;">SpanID:0000000000000000</div>
<div class="t" style="left:1378.30px;top:1359.37px;font-size:29.5px;line-height:29.5px;font-weight:400;font-family:'Liberation Sans', sans-serif;letter-spacing:0.253px;color:#ccccdc;">View Linked Span</div>
<div class="t" style="left:2358.80px;top:1365.24px;font-size:26.7px;line-height:26.7px;font-weight:400;font-family:'Liberation Sans', sans-serif;letter-spacing:-0.223px;color:#c6c6ce;">TraceID:76c58361d46c08761c37ef5821e8fb78</div>
<div class="t" style="left:2927.60px;top:1365.24px;font-size:26.7px;line-height:26.7px;font-weight:400;font-family:'Liberation Sans', sans-serif;letter-spacing:-0.132px;color:#c6c6ce;">SpanID:6051f05f10af0399</div>
<div class="t" style="left:1424.80px;top:1419.87px;font-size:29.5px;line-height:29.5px;font-weight:400;font-family:'Liberation Sans', sans-serif;letter-spacing:1.150px;color:#ccccdc;-webkit-text-stroke:0.83px #ccccdc;">attributes:</div>
<div class="t" style="left:1584.00px;top:1419.87px;font-size:29.5px;line-height:29.5px;font-weight:400;font-family:'Liberation Sans', sans-serif;letter-spacing:0.600px;color:#8a8a8e;">target</div>
<div class="t" style="left:1670.80px;top:1419.87px;font-size:29.5px;line-height:29.5px;font-weight:400;font-family:'Liberation Sans', sans-serif;color:#6a6a6e;">=</div>
<div class="t" style="left:1718.00px;top:1419.87px;font-size:29.5px;line-height:29.5px;font-weight:400;font-family:'Liberation Sans', sans-serif;letter-spacing:0.637px;color:#ccccdc;">persist to datastore</div>
<div class="t" style="left:2965.00px;top:1490.95px;font-size:25.5px;line-height:25.5px;font-weight:400;font-family:'Liberation Sans', sans-serif;letter-spacing:0.083px;color:#5d5d61;">SpanID:</div>
<div class="t" style="left:3062.75px;top:1490.95px;font-size:25.5px;line-height:25.5px;font-weight:400;font-family:'Liberation Sans', sans-serif;letter-spacing:-0.617px;color:#ccccdc;">161b5911e7a0ec18</div>
<div class="t" style="left:75.50px;top:1542.26px;font-size:27.5px;line-height:27.5px;font-weight:400;font-family:'Liberation Sans', sans-serif;letter-spacing:-0.020px;color:#a9a9ad;">acquire connection (213μs)</div>
<div class="t" style="left:1755.50px;top:1544.45px;font-size:25.5px;line-height:25.5px;font-weight:400;font-family:'Liberation Sans', sans-serif;letter-spacing:-0.625px;color:#b8b8be;">213μs</div>
<div class="t" style="left:75.50px;top:1598.26px;font-size:27.5px;line-height:27.5px;font-weight:400;font-family:'Liberation Sans', sans-serif;letter-spacing:-0.443px;color:#a9a9ad;">UPDATE scribe.__watermark (397.83μs)</div>
<div class="t" style="left:2292.00px;top:1600.45px;font-size:25.5px;line-height:25.5px;font-weight:400;font-family:'Liberation Sans', sans-serif;color:#b8b8be;">397.83μs</div>
<div class="t" style="left:75.50px;top:1654.26px;font-size:27.5px;line-height:27.5px;font-weight:400;font-family:'Liberation Sans', sans-serif;letter-spacing:0.180px;color:#a9a9ad;">commit transaction (528μs)</div>
<div class="t" style="left:2486.00px;top:1656.45px;font-size:25.5px;line-height:25.5px;font-weight:400;font-family:'Liberation Sans', sans-serif;letter-spacing:0.750px;color:#b8b8be;">528μs</div>
</body></html>
